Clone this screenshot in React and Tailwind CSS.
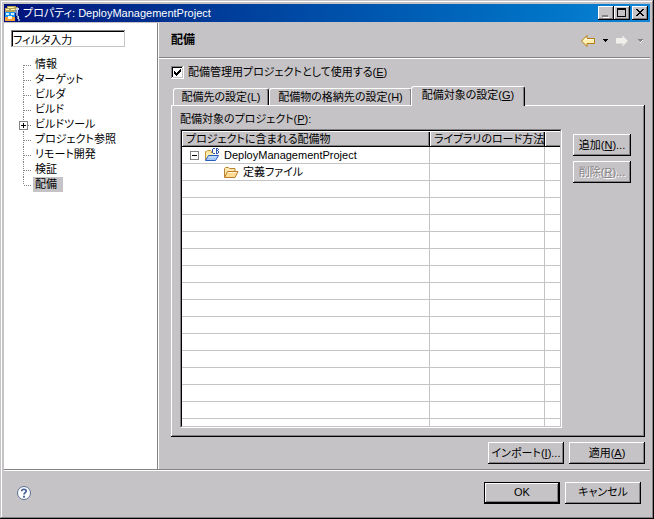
import React, { useState } from 'react';

const treeItems = [
  { label: '情報' },
  { label: 'ターゲット' },
  { label: 'ビルダ' },
  { label: 'ビルド' },
  { label: 'ビルドツール', expandable: true },
  { label: 'プロジェクト参照' },
  { label: 'リモート開発' },
  { label: '検証' },
  { label: '配備' },
];

const tabs = [
  { text: '配備先の設定', accessKey: 'L', width: 'w-24', underline: false },
  { text: '配備物の格納先の設定', accessKey: 'H', width: 'w-[143px]', underline: false },
  { text: '配備対象の設定', accessKey: 'G', width: 'w-[114px]', underline: true },
];

const EMPTY_ROWS = 15;

const raised = 'shadow-[inset_-1px_-1px_#000,inset_1px_1px_#fff,inset_-2px_-2px_#848284]';
const cell = 'h-[17px] border-b border-r border-[#c6c3c6] p-0';
const lastCell = 'h-[17px] border-b border-[#c6c3c6] p-0';
const headCell =
  'h-4 border-b border-black bg-[#c6c3c6] py-0 pr-0 pl-1 text-left align-bottom font-normal leading-[14px] whitespace-nowrap shadow-[inset_1px_1px_#fff,inset_-1px_0_#000,inset_-2px_-1px_#848284]';
const lastHeadCell = 'h-4 border-b border-black bg-[#c6c3c6] p-0 shadow-[inset_1px_1px_#fff,inset_0_-1px_#848284]';

const AppIcon = () => (
  <svg width="17" height="17" viewBox="0 0 17 17" shapeRendering="crispEdges" aria-hidden="true">
    <path d="M3 1h9v1h2v3h-2v2H1V3h2z" fill="#b5a25a" />
    <path d="M4 2h6v1H4zM2 4h3v1H2zM7 4h4v1H7z" fill="#fff3a5" />
    <path d="M1 7h10v5H1z" fill="#1896f7" />
    <path d="M2 8h3v2H2zM7 8h3v2H7z" fill="#d6efff" />
    <path d="M1 12h10v4H1z" fill="#f79e39" />
    <path d="M4 11h4v3H4z" fill="#fff7de" />
    <path d="M11 5h2v3h1v3h1v3h1v2h-2v-2h-1v-3h-1V8h-1z" fill="#8496c6" />
    <path d="M12 3h3v2h-1v3h-1V5h-1zM14 11h1v3h-1z" fill="#c6cfe7" />
  </svg>
);

const BackArrow = () => (
  <svg width="16" height="14" viewBox="0 0 16 14" aria-hidden="true">
    <path d="M1.5 7 7 1.5V4.5h7.5v5H7v3z" fill="#ffefb0" stroke="#b57d10" strokeLinejoin="round" />
    <path d="M3.5 7 6.5 4v1.5h7" fill="none" stroke="#fffbe0" />
  </svg>
);

const ForwardArrow = () => (
  <svg width="14" height="14" viewBox="0 0 14 14" aria-hidden="true">
    <path d="M1 4h6.5V1.5L13 7l-5.500 5.500V10H1z" fill="#efefec" />
    <path d="M1 9.500h7v2l4.500-4.500" fill="none" stroke="#dedbd6" />
  </svg>
);

const DownTriangle = ({ disabled }) => (
  <svg width="7" height="5" viewBox="0 0 7 5" shapeRendering="crispEdges" aria-hidden="true">
    {disabled && <path d="M5 1h1v1H5v1H4v1H3v1h1V4h1V3h1V1z" fill="#fff" />}
    <path d="M1 1h5v1H5v1H4v1H3V3H2V2H1z" fill={disabled ? '#848284' : '#000'} />
  </svg>
);

const ProjectIcon = () => (
  <svg width="17" height="16" viewBox="0 0 17 16" aria-hidden="true">
    <path d="M2.500 13V4.500h1l1-1h3l1 1v2" fill="#ffe39c" stroke="#c6963a" />
    <path d="M3 12V6h7v3H5z" fill="#ffefad" />
    <path d="M2.500 13.500 5.500 8.500h10l-3 5z" fill="#a5cbff" stroke="#295dbd" strokeLinejoin="round" />
    <path d="M5.500 10h8" stroke="#dcebff" />
    <g fill="#2959ad" shapeRendering="crispEdges">
      <path d="M10 1h2v1h-2zM9 2h1v4H9zM10 6h2v1h-2z" />
      <path d="M13 1h1v6h-1zM14 1h1v1h-1zM14 3h1v1h-1zM14 6h1v1h-1zM15 2h1v1h-1zM15 4h1v2h-1z" />
    </g>
  </svg>
);

const FolderIcon = () => (
  <svg width="16" height="14" viewBox="0 0 16 14" aria-hidden="true">
    <path d="M1.500 12V3.500l1-1h3l1 1h5.500v3" fill="#ffe7ad" stroke="#bd8231" strokeLinejoin="round" />
    <path d="M1.500 12.500 4.500 6.500h10.500l-3 6z" fill="#ffdb94" stroke="#bd7d29" strokeLinejoin="round" />
    <path d="M5 7.500h8.500" stroke="#fff3ce" />
  </svg>
);

const HelpIcon = () => (
  <svg width="16" height="16" viewBox="0 0 16 16" aria-hidden="true">
    <circle cx="8" cy="8" r="6.500" fill="#fff" stroke="#5a7194" />
    <path d="M5.700 6.300C5.700 3.500 10.300 3.600 10.200 6.200 10.100 7.700 8 7.700 8 9.600" fill="none" stroke="#3f6096" strokeWidth="1.700" />
    <path d="M7 10.700h2v1.800H7z" fill="#3f6096" />
  </svg>
);

const PushButton = ({ children, disabled, className = '' }) => (
  <button
    type="button"
    disabled={disabled}
    className={`h-[22px] leading-[15px] whitespace-nowrap ${raised} ${disabled ? 'text-[#848284] [text-shadow:1px_1px_#fff]' : ''} ${className}`}
  >
    {children}
  </button>
);

const CaptionButton = ({ label, children }) => (
  <button type="button" aria-label={label} className={`h-[14px] w-4 bg-[#c6c3c6] ${raised}`}>
    <svg width="16" height="14" viewBox="0 0 16 14" shapeRendering="crispEdges" fill="none" stroke="#000">
      {children}
    </svg>
  </button>
);

const TitleBar = () => (
  <header className="flex h-[18px] shrink-0 items-center bg-linear-to-r from-[#00107b] to-[#1086d6] pr-0.5 text-white">
    <AppIcon />
    <h1 className="ml-0.5 flex-1 truncate leading-[18px]">プロパティ: DeployManagementProject</h1>
    <div className="flex">
      <CaptionButton label="最小化">
        <path d="M4 10h6" stroke="#848284" strokeWidth="2" />
        <path d="M5 11.500h6" stroke="#fff" />
      </CaptionButton>
      <CaptionButton label="最大化">
        <path d="M3.500 3v7.500h8V3" />
        <path d="M3 3h9" strokeWidth="2" />
      </CaptionButton>
      <span className="w-0.5" />
      <CaptionButton label="閉じる">
        <path
          d="M4 3h2v1h1v1h2V4h1V3h2v1h-1v1h-1v1H9v1h1v1h1v1h1v1h-2V9H9V8H7v1H6v1H4V9h1V8h1V7h1V6H6V5H5V4H4z"
          fill="#000"
          stroke="none"
        />
      </CaptionButton>
    </div>
  </header>
);

const Sidebar = ({ selected, onSelect }) => {
  const [filter, setFilter] = useState('フィルタ入力');

  return (
    <nav className="mt-px w-[153px] shrink-0 bg-white pt-[7px] pl-[7px]">
      <input
        type="text"
        aria-label="フィルタ入力"
        value={filter}
        onChange={(e) => setFilter(e.target.value)}
        className="block h-[17px] w-[114px] bg-white px-0.5 shadow-[inset_1px_1px_#848284,inset_-1px_-1px_#c6c3c6,inset_2px_2px_#000] outline-none"
      />
      <ul className="mt-2.5 ml-2">
        {treeItems.map((item, i) => (
          <li key={item.label} className="flex h-[15px]">
            {/* Connector lines and the expand box */}
            <svg width="14" height="15" viewBox="0 0 14 15" shapeRendering="crispEdges" className="shrink-0" aria-hidden="true">
              <path d={i === treeItems.length - 1 ? 'M4.500 0v8' : i === 0 ? 'M4.500 8v7' : 'M4.500 0v15'} stroke="#848284" strokeDasharray="1 1" />
              <path d="M5 8.500h8" stroke="#848284" strokeDasharray="1 1" />
              {item.expandable && (
                <>
                  <path d="M.5 4.500h8v8h-8z" fill="#fff" stroke="#848284" />
                  <path d="M2 8.500h5M4.500 6v5" stroke="#000" />
                </>
              )}
            </svg>
            <button
              type="button"
              onClick={() => onSelect(item.label)}
              className={`pr-1.5 pl-0.5 leading-[15px] whitespace-nowrap ${selected === item.label ? 'bg-[#c6c3c6]' : ''}`}
            >
              {item.label}
            </button>
          </li>
        ))}
      </ul>
    </nav>
  );
};

const DeployTable = () => (
  <div className="min-w-0 flex-1 overflow-hidden border-t border-l border-[#848284] shadow-[1px_1px_#fff]">
    <div className="h-full overflow-hidden border border-t-black border-r-[#c6c3c6] border-b-[#c6c3c6] border-l-black bg-white">
      <table className="w-full table-fixed border-separate border-spacing-0">
        <colgroup>
          <col />
          <col className="w-[115px]" />
          <col className="w-[15px]" />
        </colgroup>
        <thead>
          <tr>
            <th className={headCell}>プロジェクトに含まれる配備物</th>
            <th className={headCell}>ライブラリのロード方法</th>
            <th className={lastHeadCell} aria-label="余白" />
          </tr>
        </thead>
        <tbody>
          <tr>
            <td className={cell}>
              <div className="flex h-4 items-center pl-2">
                <svg width="9" height="9" viewBox="0 0 9 9" shapeRendering="crispEdges" aria-hidden="true">
                  <path d="M.5.5h8v8h-8z" fill="#fff" stroke="#848284" />
                  <path d="M2 4.500h5" stroke="#000" />
                </svg>
                <span className="ml-1">
                  <ProjectIcon />
                </span>
                <span className="ml-1 leading-4">DeployManagementProject</span>
              </div>
            </td>
            <td className={cell} />
            <td className={lastCell} />
          </tr>
          <tr>
            <td className={cell}>
              <div className="flex h-4 items-center pl-[41px]">
                <FolderIcon />
                <span className="ml-1 leading-4">定義ファイル</span>
              </div>
            </td>
            <td className={cell} />
            <td className={lastCell} />
          </tr>
          {Array.from({ length: EMPTY_ROWS }, (_, i) => (
            <tr key={i}>
              <td className={cell} />
              <td className={cell} />
              <td className={lastCell} />
            </tr>
          ))}
        </tbody>
      </table>
    </div>
  </div>
);

const Tab = ({ tab, active, onClick }) => (
  <button
    type="button"
    role="tab"
    aria-selected={active}
    onClick={onClick}
    className={`rounded-t-[3px] border-t border-l border-r border-t-white border-l-white border-r-black bg-[#c6c3c6] leading-[15px] whitespace-nowrap shadow-[inset_-1px_0_#848284] ${tab.width} ${
      active ? 'z-10 -mb-px -ml-px h-5 pb-0.5' : 'h-[17px]'
    }`}
  >
    {tab.text}({tab.underline ? <u>{tab.accessKey}</u> : tab.accessKey})
  </button>
);

const DeployPage = () => {
  const [activeTab, setActiveTab] = useState(2);
  const [managed, setManaged] = useState(true);

  return (
    <main className="flex min-w-0 flex-1 flex-col">
      <div className="flex h-9 shrink-0 items-center border-b border-[#848284] pl-3 shadow-[0_1px_#fff]">
        <h2 className="flex-1 text-xs font-bold">配備</h2>
        <div className="flex items-center pt-0.5 pr-1.5">
          <button type="button" aria-label="戻る"><BackArrow /></button>
          <button type="button" aria-label="戻る履歴" className="ml-1.5"><DownTriangle /></button>
          <button type="button" aria-label="進む" className="ml-1.5" disabled><ForwardArrow /></button>
          <button type="button" aria-label="進む履歴" className="ml-2" disabled><DownTriangle disabled /></button>
        </div>
      </div>

      <div className="flex min-h-0 flex-1 flex-col pt-1.5 pr-[5px] pb-[5px] pl-3">
        <label className="flex h-4 items-center self-start">
          <input
            type="checkbox"
            checked={managed}
            onChange={(e) => setManaged(e.target.checked)}
            className="peer sr-only"
          />
          <svg width="13" height="13" viewBox="0 0 13 13" shapeRendering="crispEdges" aria-hidden="true">
            <path d="M0 0h13v13H0z" fill="#fff" />
            <path d="M0 0h12v1H1v11H0z" fill="#848284" />
            <path d="M1 1h10v1H2v9H1z" fill="#000" />
            <path d="M2 11h9V2h1v10H2z" fill="#c6c3c6" />
            {managed && <path d="M3 5h1v1h1v1h1V6h1V5h1V4h1V3h1v3H9v1H8v1H7v1H6v1H5V9H4V8H3z" fill="#000" />}
          </svg>
          <span className="ml-1">配備管理用プロジェクトとして使用する(<u>E</u>)</span>
        </label>

        <div role="tablist" className="mt-[5px] ml-0.5 flex h-5 shrink-0 items-end">
          {tabs.map((tab, i) => (
            <Tab key={tab.text} tab={tab} active={i === activeTab} onClick={() => setActiveTab(i)} />
          ))}
        </div>

        <section
          role="tabpanel"
          className={`flex min-h-0 flex-1 flex-col pt-1.5 pr-[14px] pb-[10px] pl-[9px] ${raised}`}
        >
          <h3 className="leading-4">配備対象のプロジェクト(<u>P</u>):</h3>
          <div className="mt-0.5 flex min-h-0 flex-1">
            <DeployTable />
            <div className="ml-3 flex w-[58px] shrink-0 flex-col gap-[5px] pt-[5px]">
              <PushButton>追加(<u>N</u>)...</PushButton>
              <PushButton disabled>削除(<u>R</u>)...</PushButton>
            </div>
          </div>
        </section>

        <div className="mt-[5px] flex shrink-0 justify-end gap-[5px]">
          <PushButton className="w-[76px]">インポート(<u>I</u>)...</PushButton>
          <PushButton className="w-[76px]">適用(<u>A</u>)</PushButton>
        </div>
      </div>
    </main>
  );
};

const App = () => {
  const [selected, setSelected] = useState('配備');

  return (
    <div
      lang="ja"
      className="flex h-screen flex-col bg-[#c6c3c6] p-1 font-['Liberation_Sans','Noto_Sans_CJK_JP',sans-serif] text-[11px] leading-[15px] text-black [font-feature-settings:'palt'] shadow-[inset_-1px_-1px_#000,inset_1px_1px_#c6c3c6,inset_-2px_-2px_#848284,inset_2px_2px_#fff]"
    >
      <TitleBar />
      <div className="flex min-h-0 flex-1 border-b border-[#848284] shadow-[0_1px_#fff]">
        <Sidebar selected={selected} onSelect={setSelected} />
        <div className="mt-px w-0.5 shrink-0 border-r border-l border-r-white border-l-[#848284]" />
        <DeployPage />
      </div>
      <footer className="flex h-[45px] shrink-0 items-center pr-[9px] pl-3">
        <button type="button" aria-label="ヘルプ">
          <HelpIcon />
        </button>
        <div className="ml-auto flex gap-[5px]">
          <button
            type="submit"
            className="h-[22px] w-[76px] border border-black leading-[15px] shadow-[inset_-1px_-1px_#000,inset_1px_1px_#fff,inset_-2px_-2px_#848284]"
          >
            OK
          </button>
          <PushButton className="w-[76px]">キャンセル</PushButton>
        </div>
      </footer>
    </div>
  );
};

export default App;
